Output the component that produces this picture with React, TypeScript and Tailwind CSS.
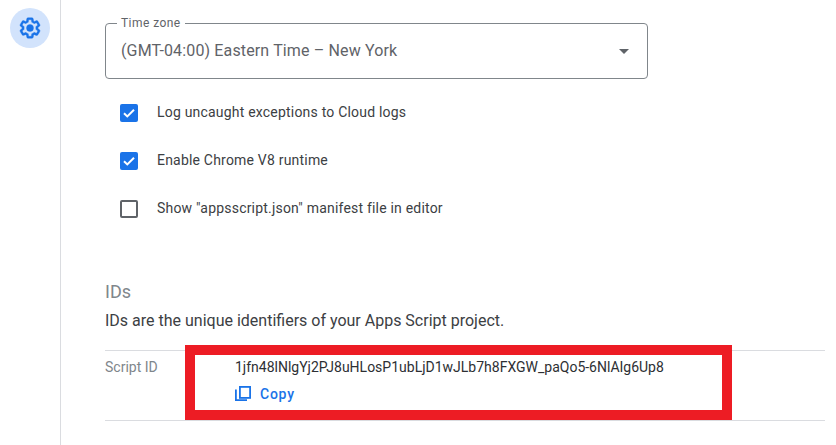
import React from "react";

function Check({ checked, label }: { checked: boolean; label: string }) {
  return (
    <div className="flex items-center h-[18px] pl-[15px]">
      {checked ? (
        <span className="w-[18px] h-[18px] rounded-[2px] bg-[#1a73e8] flex items-center justify-center shrink-0">
          <svg width="14" height="14" viewBox="0 0 14 14" fill="none">
            <path d="M2 7.2 L5.3 10.4 L12 3.7" stroke="#fff" strokeWidth="2" />
          </svg>
        </span>
      ) : (
        <span className="w-[18px] h-[18px] rounded-[2px] border-2 border-[#5f6368] shrink-0" />
      )}
      <span className="ml-[19px] -mt-[2px] text-[14px] leading-[18px] tracking-[0.2px] text-[#3c4043]">{label}</span>
    </div>
  );
}

export default function App() {
  return (
    <div className="flex h-[445px] w-[836px] overflow-hidden bg-white font-['Roboto',sans-serif]">
      <aside className="w-[61px] shrink-0 border-r border-[#dadce0] pt-[8px] pl-[10px]">
        <div className="w-10 h-10 rounded-full bg-[#d2e3fc] flex items-center justify-center">
          <svg width="24" height="24" viewBox="0 0 24 24" fill="#1a73e8" stroke="#1a73e8" strokeWidth="0.4">
            <path d="M13.85 22.25h-3.7c-.74 0-1.36-.54-1.45-1.27l-.27-1.89c-.27-.14-.53-.29-.79-.46l-1.8.72c-.7.26-1.47-.03-1.81-.65L2.2 15.53c-.35-.66-.2-1.44.36-1.88l1.53-1.19c-.01-.15-.02-.3-.02-.46 0-.15.01-.31.02-.46l-1.52-1.19c-.59-.45-.74-1.26-.37-1.88l1.85-3.19c.34-.62 1.11-.9 1.79-.63l1.81.73c.26-.17.52-.32.78-.46l.27-1.91c.09-.7.71-1.25 1.44-1.25h3.7c.74 0 1.36.54 1.45 1.27l.27 1.89c.27.14.53.29.79.46l1.8-.72c.71-.26 1.48.03 1.82.65l1.84 3.18c.36.66.2 1.44-.36 1.88l-1.52 1.19c.01.15.02.3.02.46s-.01.31-.02.46l1.52 1.19c.56.45.72 1.23.37 1.86l-1.86 3.22c-.34.62-1.11.9-1.8.63l-1.8-.72c-.26.17-.52.32-.78.46l-.27 1.91c-.1.68-.72 1.22-1.46 1.22zm-3.23-2h2.76l.37-2.55.53-.22c.44-.18.88-.44 1.34-.78l.45-.34 2.38.96 1.38-2.4-2.03-1.58.07-.56c.03-.26.06-.51.06-.78s-.03-.53-.06-.78l-.07-.56 2.03-1.58-1.39-2.4-2.39.96-.45-.35c-.42-.32-.87-.58-1.33-.77l-.52-.22-.37-2.55h-2.76l-.37 2.55-.53.21c-.44.19-.88.44-1.34.79l-.45.33-2.38-.95-1.39 2.39 2.03 1.58-.07.56a7 7 0 0 0-.06.79c0 .26.02.53.06.78l.07.56-2.03 1.58 1.38 2.4 2.39-.96.45.35c.43.33.86.58 1.33.77l.53.22.38 2.55z" />
            <circle cx="12" cy="12" r="3.5" />
          </svg>
        </div>
      </aside>
      <main className="relative flex-1 pl-[44px] pt-[23px]">
        <div className="relative w-[543px] h-[56px] rounded-[4px] border border-[#80868b] flex items-center pl-[15px] pr-[18px]">
          <span className="absolute left-[11px] -top-[8px] bg-white px-[4px] text-[12px] leading-[14px] tracking-[0.45px] text-[#5f6368]">Time zone</span>
          <span className="flex-1 text-[16px] leading-[24px] tracking-[0.14px] text-[#5f6368]">(GMT-04:00) Eastern Time – New York</span>
          <svg width="10" height="5" viewBox="0 0 10 5" fill="#5f6368"><path d="M0 0h10L5 5z" /></svg>
        </div>
        <div className="mt-[25px] flex flex-col gap-[30px]">
          <Check checked label="Log uncaught exceptions to Cloud logs" />
          <Check checked label="Enable Chrome V8 runtime" />
          <Check checked={false} label={'Show "appsscript.json" manifest file in editor'} />
        </div>
        <h2 className="mt-[62px] text-[18px] leading-[24px] font-normal text-[#80868b]">IDs</h2>
        <p className="mt-[5px] text-[16px] leading-[24px] text-[#3c4043]">IDs are the unique identifiers of your Apps Script project.</p>
        <div className="mt-[17px] w-[720px] h-[71px] border-y border-[#dadce0] flex">
          <div className="w-[130px] pt-[7px] text-[14px] leading-[18px] text-[#80868b]">Script ID</div>
          <div className="pt-[7px]">
            <div className="text-[14px] leading-[18px] text-[#2d2f33]">1jfn48lNlgYj2PJ8uHLosP1ubLjD1wJLb7h8FXGW_paQo5-6NlAIg6Up8</div>
            <div className="mt-[9px] flex items-center text-[#1a73e8]">
              <svg width="18" height="18" viewBox="0 0 18 18" fill="none" stroke="#1a73e8" strokeWidth="1.8">
                <path d="M0.9 4.5V15.1H12" />
                <rect x="4.9" y="1.9" width="10.2" height="11" />
              </svg>
              <span className="ml-[7px] text-[14px] leading-[18px] font-medium tracking-[0.75px]">Copy</span>
            </div>
          </div>
        </div>
        <div className="absolute left-[124px] top-[345px] w-[547px] h-[75px] border-[10px] border-[#ed1c24]" />
      </main>
    </div>
  );
}
